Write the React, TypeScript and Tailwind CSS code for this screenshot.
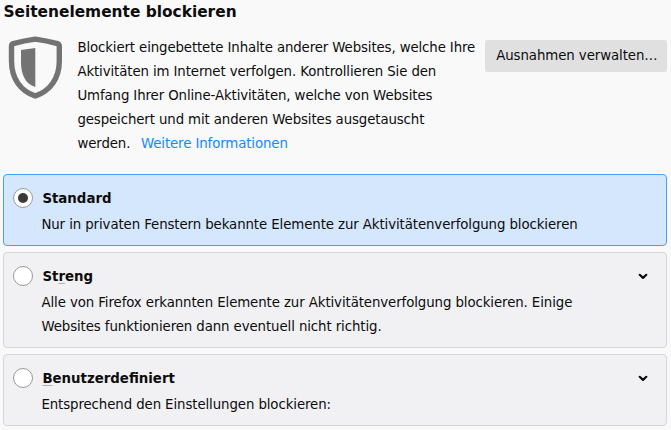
import React from 'react';

interface Option {
  id: string;
  before: string;
  accessKey: string;
  after: string;
  description: string[];
  expandable: boolean;
  height: string;
}

const options: Option[] = [
  {
    id: 'standard',
    before: 'Standard',
    accessKey: '',
    after: '',
    description: ['Nur in privaten Fenstern bekannte Elemente zur Aktivitätenverfolgung blockieren'],
    expandable: false,
    height: 'h-[72px]',
  },
  {
    id: 'strict',
    before: 'St',
    accessKey: 'r',
    after: 'eng',
    description: [
      'Alle von Firefox erkannten Elemente zur Aktivitätenverfolgung blockieren. Einige',
      'Websites funktionieren dann eventuell nicht richtig.',
    ],
    expandable: true,
    height: 'h-24',
  },
  {
    id: 'custom',
    before: '',
    accessKey: 'B',
    after: 'enutzerdefiniert',
    description: ['Entsprechend den Einstellungen blockieren:'],
    expandable: true,
    height: 'h-[72px]',
  },
];

const ShieldIcon: React.FC = () => (
  <svg viewBox="0 0 54 64" className="w-[54px] h-16" fill="none">
    <path
      d="M27.300 3.100Q38 4.500 49.600 7.700Q51.300 8.200 51.300 10.500V25C51.300 42.500 42 55 27.300 60C12.500 55 3.500 42.500 3.500 25V10.500Q3.500 8.200 5.200 7.700Q16 4.500 27.300 3.100Z"
      stroke="#737373"
      strokeWidth="5.400"
      strokeLinejoin="round"
    />
    <path d="M27.300 12v39C17.500 48 13 39 13 26V14Z" fill="#737373" />
  </svg>
);

const ChevronIcon: React.FC = () => (
  <svg viewBox="0 0 10 7" className="w-[10px] h-[7px]" fill="none">
    <path d="M1.700 1.800 5 4.900 8.300 1.800" stroke="#0c0c0d" strokeWidth="2.200" strokeLinecap="round" strokeLinejoin="round" />
  </svg>
);

const App: React.FC = () => {
  const selected = 'standard';

  return (
    <div className="w-[671px] h-[430px] overflow-hidden bg-[#f9f9fa] pl-[3.400px] pr-[3.600px] font-['DejaVu_Sans',sans-serif] text-[13.333px] leading-6 text-[#0c0c0d]">
      <h1 className="h-9 text-[15.4px] font-bold">Seitenelemente blockieren</h1>
      <div className="flex h-[138px] items-start">
        <div className="w-[74px] shrink-0 pl-[5px]">
          <ShieldIcon />
        </div>
        <p className="w-[408px] shrink-0 whitespace-nowrap tracking-[-0.110px]">
          <span className="tracking-[-0.120px]">Blockiert eingebettete Inhalte anderer Websites, welche Ihre</span><br />
          Aktivitäten im Internet verfolgen. Kontrollieren Sie den<br />
          Umfang Ihrer Online-Aktivitäten, welche von Websites<br />
          gespeichert und mit anderen Websites ausgetauscht<br />
          werden. <a className="ml-[6.500px] text-[#0f8aff]">Weitere Informationen</a>
        </p>
        <button className="mt-[4px] h-8 w-[182px] shrink-0 rounded-[2px] bg-[#e0e0e1] pl-px whitespace-nowrap tracking-[-0.080px]">
          Ausnahmen verwalten…
        </button>
      </div>
      <div className="flex flex-col gap-[6px]">
        {options.map((option) => (
          <label
            key={option.id}
            className={`flex items-start rounded-[4px] border pl-[9px] pt-[12px] ${option.height} ${
              option.id === selected ? 'border-[#45a1ff] bg-[#d5e7fc]' : 'border-[#d7d7db] bg-[#f1f1f3]'
            }`}
          >
            <span className="mt-[1px] flex h-5 w-5 shrink-0 items-center justify-center rounded-full border border-[#999] bg-white">
              {option.id === selected && <span className="h-[10px] w-[10px] rounded-full bg-[#3a3a3b]" />}
            </span>
            <div className="ml-2 flex-1 whitespace-nowrap">
              <div className="h-[26px] pl-px font-bold">
                {option.before}<span className="underline decoration-[#b1b1b3] decoration-1 underline-offset-2">{option.accessKey}</span>{option.after}
              </div>
              {option.description.map((line) => (
                <div key={line} className="tracking-[-0.095px]">{line}</div>
              ))}
            </div>
            {option.expandable && (
              <span className="mr-[18px] mt-[8px] flex">
                <ChevronIcon />
              </span>
            )}
          </label>
        ))}
      </div>
    </div>
  );
};

export default App;
